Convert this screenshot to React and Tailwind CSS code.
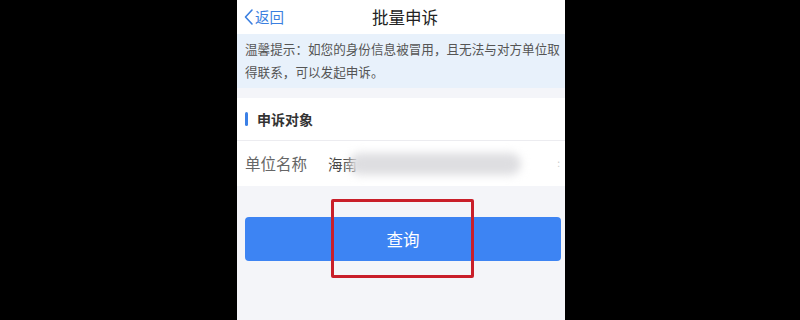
import React from "react";

const font = { fontFamily: '"Noto Sans CJK SC", "Noto Sans", sans-serif' };

const App = () => {
  return (
    <div className="w-[800px] h-[320px] bg-black flex" style={font}>
      <div className="relative ml-[237px] w-[328px] h-full bg-[#f4f5f9] overflow-hidden flex flex-col">
        {/* header */}
        <div className="relative h-[34px] bg-white flex items-center shrink-0">
          <div className="flex items-center pl-[6px] text-[#3b7fe0]">
            <svg width="11" height="18" viewBox="0 0 11 18" fill="none">
              <path d="M9 2L2.5 9L9 16" stroke="#3b7fe0" strokeWidth="1.6" strokeLinecap="round" strokeLinejoin="round" />
            </svg>
            <span className="text-[14.5px] leading-none ml-[1px]">返回</span>
          </div>
          <div className="absolute left-[135px] top-0 h-full flex items-center text-[16.5px] text-[#222]">
            批量申诉
          </div>
        </div>

        {/* notice */}
        <div className="h-[54px] bg-[#e8f1fb] pl-[8px] pt-[3px] text-[12.6px] leading-[23px] text-[#555] shrink-0">
          温馨提示：如您的身份信息被冒用，且无法与对方单位取
          <br />
          得联系，可以发起申诉。
        </div>

        <div className="h-[10px] shrink-0" />

        {/* section title */}
        <div className="h-[43px] bg-white flex items-center pl-[8px] border-b border-[#ececf0] shrink-0">
          <span className="w-[3px] h-[14px] rounded-sm bg-[#3b80e6]" />
          <span className="ml-[9px] text-[14px] font-bold text-[#333]">申诉对象</span>
        </div>

        {/* row */}
        <div className="relative h-[45px] bg-white flex items-center pl-[8px] shrink-0">
          <span className="text-[15.5px] text-[#666] w-[83px]">单位名称</span>
          <span className="text-[14.5px] text-[#444]">海南</span>
          <span className="-ml-[8px] w-[172px] h-[22px] bg-[#dedee1] rounded-full blur-[4px]" />
          <span className="absolute right-[5px] top-[17px] text-[10px] leading-none text-[#ccc]">:</span>
        </div>

        {/* button */}
        <div className="mt-[31px] ml-[8px] mr-[4px] h-[44px] rounded-[4px] bg-[#3d84f3] flex items-center justify-center shrink-0">
          <span className="text-[16.5px] text-white">查询</span>
        </div>

        {/* highlight box */}
        <div className="absolute left-[94px] top-[199px] w-[143px] h-[79px] border-[3px] border-[#c91f2a] rounded-[2px]" />
      </div>
    </div>
  );
};

export default App;
